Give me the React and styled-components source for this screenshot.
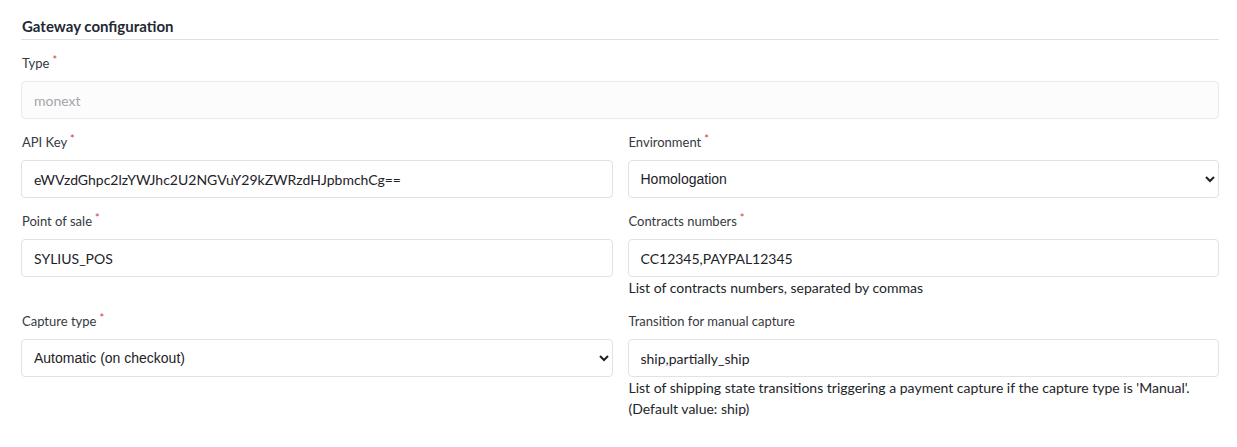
import React from "react";
import styled, { createGlobalStyle } from "styled-components";

const Global = createGlobalStyle`
  html, body { margin: 0; padding: 0; background: #ffffff; }
  body { font-family: Lato, "Noto Sans", sans-serif; color: #212529; }
  * { box-sizing: border-box; }
`;

const Section = styled.section`
  padding: 16px 18px 0 21px;
`;

const Heading = styled.h3`
  margin: 0 0 13px;
  padding: 0 0 3px 1px;
  font-family: Lato, sans-serif;
  font-weight: 700;
  font-size: 15px;
  line-height: 20px;
  color: #232933;
  border-bottom: 1px solid #dcdfe3;
`;

const Grid = styled.div`
  display: grid;
  grid-template-columns: 1fr 1fr;
  column-gap: 15px;
  align-items: start;
`;

const Field = styled.div`
  grid-column: ${(p) => (p.$full ? "1 / -1" : "auto")};
  margin-bottom: 13px;
`;

const Label = styled.label`
  display: block;
  padding-left: 1px;
  margin-bottom: 8px;
  font-size: 13px;
  line-height: 20px;
  color: #353a40;
`;

const Required = styled.span`
  color: #d63939;
  font-size: 11px;
  vertical-align: top;
  line-height: 13px;
  margin-left: 3px;
`;

const Input = styled.input`
  display: block;
  width: 100%;
  height: 38px;
  padding: 0 12px;
  border: 1px solid ${(p) => (p.disabled ? "#e9ebee" : "#dfe2e6")};
  border-radius: 4px;
  background-color: ${(p) => (p.disabled ? "#fcfcfd" : "#ffffff")};
  font-family: Lato, sans-serif;
  font-size: 14px;
  color: ${(p) => (p.disabled ? "#a3a6aa" : "#1d2227")};
  outline: none;
  &:disabled { opacity: 1; background-color: #fcfcfd; }
`;

const Select = styled.select`
  display: block;
  width: 100%;
  height: 38px;
  padding: 0 5px 0 8px;
  border: 1px solid #dfe2e6;
  border-radius: 4px;
  background: #ffffff;
  font-family: "Liberation Sans", Arial, sans-serif;
  font-size: 14px;
  color: #1d2227;
  outline: none;
`;

const Help = styled.div`
  padding-left: 1px;
  font-size: 14px;
  line-height: 21px;
  color: #212529;
`;

function FieldLabel({ children, required }) {
  return (
    <Label>
      {children}
      {required && <Required>*</Required>}
    </Label>
  );
}

export default function App() {
  return (
    <>
      <Global />
      <Section>
        <Heading>Gateway configuration</Heading>
        <Grid>
          <Field $full>
            <FieldLabel required>Type</FieldLabel>
            <Input disabled value="monext" readOnly />
          </Field>
          <Field>
            <FieldLabel required>API Key</FieldLabel>
            <Input value="eWVzdGhpc2lzYWJhc2U2NGVuY29kZWRzdHJpbmchCg==" readOnly />
          </Field>
          <Field>
            <FieldLabel required>Environment</FieldLabel>
            <Select defaultValue="homologation">
              <option value="homologation">Homologation</option>
              <option value="production">Production</option>
            </Select>
          </Field>
          <Field>
            <FieldLabel required>Point of sale</FieldLabel>
            <Input value="SYLIUS_POS" readOnly />
          </Field>
          <Field>
            <FieldLabel required>Contracts numbers</FieldLabel>
            <Input value="CC12345,PAYPAL12345" readOnly />
            <Help>List of contracts numbers, separated by commas</Help>
          </Field>
          <Field>
            <FieldLabel required>Capture type</FieldLabel>
            <Select defaultValue="automatic">
              <option value="automatic">Automatic (on checkout)</option>
              <option value="manual">Manual</option>
            </Select>
          </Field>
          <Field>
            <FieldLabel>Transition for manual capture</FieldLabel>
            <Input value="ship,partially_ship" readOnly />
            <Help>
              List of shipping state transitions triggering a payment capture if the capture type is 'Manual'.
              <br />
              (Default value: ship)
            </Help>
          </Field>
        </Grid>
      </Section>
    </>
  );
}
